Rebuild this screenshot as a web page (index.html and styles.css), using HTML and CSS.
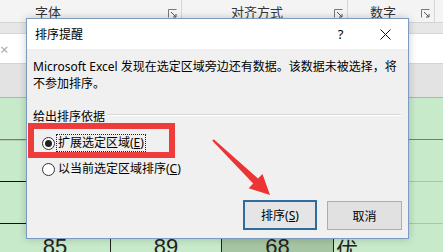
FILE: index.html
```html
<!DOCTYPE html>
<html lang="zh-CN">
<head>
  <meta charset="UTF-8" />
  <title>排序提醒</title>
  <link rel="stylesheet" href="styles.css">
</head>
<body>
  <div class="sheet">
    <div class="ribbon">
      <div class="group group-font">
        <span>字体</span>
        <svg class="launcher" width="9" height="9" viewBox="0 0 9 9"><path d="M0.5 8.5V0.5H8.5" fill="none" stroke="#777"/><path d="M3 3L8 8M8 5V8H5" fill="none" stroke="#555"/></svg>
      </div>
      <div class="group group-align">
        <span>对齐方式</span>
        <svg class="launcher" width="9" height="9" viewBox="0 0 9 9"><path d="M0.5 8.5V0.5H8.5" fill="none" stroke="#777"/><path d="M3 3L8 8M8 5V8H5" fill="none" stroke="#555"/></svg>
      </div>
      <div class="group group-number">
        <span>数字</span>
        <svg class="launcher" width="9" height="9" viewBox="0 0 9 9"><path d="M0.5 8.5V0.5H8.5" fill="none" stroke="#777"/><path d="M3 3L8 8M8 5V8H5" fill="none" stroke="#555"/></svg>
      </div>
    </div>
    <div class="strip"></div>
    <div class="formula"><span class="cancel-x">×</span></div>
    <div class="headers"></div>
    <div class="row row-first"><div class="lead"></div></div>
    <div class="row row-dark"><div class="lead"></div></div>
    <div class="row row-dark"><div class="lead"></div></div>
    <div class="row-data">
      <div class="cell">85</div>
      <div class="cell">89</div>
      <div class="cell cell-mark">68</div>
      <div class="cell cell-grade">优</div>
    </div>
  </div>

  <div class="dialog">
    <div class="titlebar">
      <span class="title">排序提醒</span>
      <span class="title-btn">?</span>
      <span class="title-btn">
        <svg width="11" height="11" viewBox="0 0 11 11"><path d="M0.5 0.5L10.5 10.5M10.5 0.5L0.5 10.5" stroke="#111" stroke-width="1"/></svg>
      </span>
    </div>
    <div class="dialog-body">
      <div class="message">Microsoft Excel 发现在选定区域旁边还有数据。该数据未被选择，将不参加排序。</div>
      <div class="group-label">给出排序依据</div>
      <div class="option option-first">
        <span class="radio checked"></span>
        <span class="option-text focused">扩展选定区域(<u>E</u>)</span>
      </div>
      <div class="option">
        <span class="radio"></span>
        <span class="option-text">以当前选定区域排序(<u>C</u>)</span>
      </div>
      <div class="actions">
        <div class="btn btn-default">排序(<u>S</u>)</div>
        <div class="btn">取消</div>
      </div>
    </div>
  </div>

  <div class="highlight"></div>
  <svg class="arrow" width="80" height="75" viewBox="0 0 80 75">
    <polygon points="12.3,10.7 53.2,53.6 48.7,58.3 70,65 62.5,43.9 58,48.6 13.7,9.3" fill="#ec3434"/>
  </svg>
</body>
</html>
```

FILE: styles.css
```css
body {
  margin: 0;
  width: 443px;
  height: 252px;
  overflow: hidden;
  position: relative;
  font-family: "Noto Sans", "Noto Sans CJK SC", sans-serif;
  font-size: 12px;
  color: #000;
  background: #c7eacb;
}

/* spreadsheet behind the dialog */
.ribbon {
  height: 22px;
  display: flex;
  background: #f4f4f4;
  border-bottom: 1px solid #d4d4d4;
}

.group {
  box-sizing: border-box;
  display: flex;
  align-items: center;
  border-right: 1px solid #d6d6d6;
  font-size: 13px;
  color: #333;
}

.group-font { width: 182px; padding-left: 35px; }
.group-align { width: 166px; padding-left: 49px; }
.group-number { width: 87px; padding-left: 22px; }

.launcher {
  margin-left: auto;
  margin-right: 4px;
  margin-top: 4px;
}

.strip {
  height: 10px;
  background: #e7e7e7;
}

.formula {
  height: 29px;
  background: #fff;
  border-top: 1px solid #d8d8d8;
  border-bottom: 1px solid #d4d4d4;
  display: flex;
  align-items: center;
}

.cancel-x {
  margin-left: 0;
  font-size: 15px;
  color: #aaa;
}

.headers {
  height: 33px;
  background: #e3e3e3;
  border-bottom: 1px solid #a9b9a9;
}

.row {
  height: 41px;
  border-bottom: 1px solid #8fa58f;
  display: flex;
}

.row-first .lead {
  width: 110px;
  height: 42px;
  border-bottom: 1px solid #b3ccb3;
}

.row-first {
  border-bottom-color: #6f826f;
}

.row-dark .lead {
  width: 110px;
  height: 41px;
  border-bottom: 1px solid #111;
}

.row-dark {
  border-bottom-color: #aac5aa;
}

.row-data {
  display: flex;
  height: 40px;
}

.cell {
  box-sizing: border-box;
  width: 111px;
  padding-top: 12px;
  border-right: 1px solid #222;
  text-align: center;
  font-family: "Liberation Sans", sans-serif;
  font-size: 22px;
  line-height: 22px;
  color: #222;
}

.cell-mark {
  width: 112px;
  background: #a6c5a2;
}

.cell-grade {
  flex: 1;
  border-right: none;
  text-align: left;
  padding-left: 2px;
  font-family: "Noto Sans CJK SC", sans-serif;
  line-height: 26px;
  padding-top: 11px;
}

/* dialog */
.dialog {
  position: absolute;
  left: 26px;
  top: 18px;
  width: 383px;
  height: 221px;
  box-sizing: border-box;
  border: 1px solid #7b9cbf;
  background: #f0f0f0;
  box-shadow: 0 0 8px rgba(0, 0, 0, 0.2);
  display: flex;
  flex-direction: column;
}

.titlebar {
  height: 30px;
  background: #fff;
  display: flex;
  align-items: center;
  padding-left: 8px;
}

.title {
  flex: 1;
}

.title-btn {
  width: 45px;
  height: 30px;
  display: flex;
  align-items: center;
  justify-content: center;
  font-size: 13px;
}

.dialog-body {
  flex: 1;
  display: flex;
  flex-direction: column;
  padding: 9px 6px 8px 6px;
}

.message {
  line-height: 17px;
}

.group-label {
  margin-top: 16px;
  line-height: 17px;
  display: flex;
  align-items: center;
}

.group-label::after {
  content: "";
  flex: 1;
  margin: 0 1px 3px 2px;
  border-top: 1px solid #d6d6d6;
  border-bottom: 1px solid #fff;
}

.option {
  height: 20px;
  margin-top: 6px;
  padding-left: 9px;
  display: flex;
  align-items: center;
}

.option-first {
  margin-top: 8px;
}

.radio {
  box-sizing: border-box;
  width: 13px;
  height: 13px;
  border: 1px solid #333;
  border-radius: 50%;
  background: #fff;
  display: flex;
  align-items: center;
  justify-content: center;
}

.radio.checked::after {
  content: "";
  width: 7px;
  height: 7px;
  border-radius: 50%;
  background: #222;
}

.option-text {
  margin-left: 2px;
  padding: 0 1px;
  line-height: 16px;
}

.focused {
  outline: 1px dotted #222;
}

.actions {
  margin-top: auto;
  display: flex;
  justify-content: flex-end;
  gap: 10px;
}

.btn {
  box-sizing: border-box;
  width: 75px;
  height: 29px;
  border: 1px solid #adadad;
  background: #e1e1e1;
  display: flex;
  align-items: center;
  justify-content: center;
}

.btn-default {
  width: 74px;
  height: 30px;
  margin-top: -1px;
  border: 2px solid #2f6c9f;
  background: #e5e5e5;
}

/* annotations drawn over the screenshot */
.highlight {
  position: absolute;
  left: 28px;
  top: 123px;
  width: 147px;
  height: 35px;
  box-sizing: border-box;
  border: 6px solid #ee3b3b;
}

.arrow {
  position: absolute;
  left: 200px;
  top: 130px;
}
```
